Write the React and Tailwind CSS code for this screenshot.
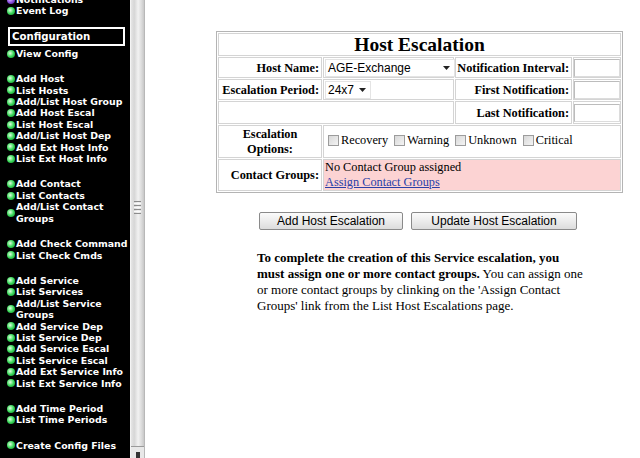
import React from 'react';

// Sidebar menu: groups of items, each item may wrap onto a second line
const menuGroups = [
    [['Notifications', 'purple'], ['Event Log']],
];

const configGroups = [
    [['View Config']],
    [
        ['Add Host'],
        ['List Hosts'],
        ['Add/List Host Group'],
        ['Add Host Escal'],
        ['List Host Escal'],
        ['Add/List Host Dep'],
        ['Add Ext Host Info'],
        ['List Ext Host Info'],
    ],
    [['Add Contact'], ['List Contacts'], ['Add/List Contact|Groups']],
    [['Add Check Command'], ['List Check Cmds']],
    [
        ['Add Service'],
        ['List Services'],
        ['Add/List Service|Groups'],
        ['Add Service Dep'],
        ['List Service Dep'],
        ['Add Service Escal'],
        ['List Service Escal'],
        ['Add Ext Service Info'],
        ['List Ext Service Info'],
    ],
    [['Add Time Period'], ['List Time Periods']],
    [['Create Config Files']],
];

function Bullet({ color }) {
    const cls =
        color === 'purple'
            ? 'bg-[radial-gradient(circle_at_40%_40%,#e0c8ff,#8a4fe0_50%,#3a1470)]'
            : 'bg-[radial-gradient(circle_at_40%_40%,#e0ffe0,#3ad85a_50%,#0f7a24)]';
    return <span className={`inline-block w-[8px] h-[8px] rounded-full shrink-0 mr-[1px] ${cls}`} />;
}

function MenuItem({ label, color }) {
    const lines = label.split('|');
    return (
        <div className="flex items-center pl-[7px] text-white">
            <Bullet color={color} />
            <span className="whitespace-nowrap">
                {lines.map((l, i) => (
                    <div key={i}>{l}</div>
                ))}
            </span>
        </div>
    );
}

function Sidebar() {
    return (
        <div className="w-[130px] shrink-0 bg-black overflow-hidden font-['DejaVu_Sans',Verdana,sans-serif] font-bold text-[9.4px] leading-[11.4px]">
            <div className="mt-[-6px]">
                {menuGroups[0].map(([l, c]) => (
                    <MenuItem key={l} label={l} color={c} />
                ))}
            </div>
            <div className="ml-[8px] mt-[10px] w-[117px] h-[19px] border-2 border-white text-white text-[10.2px] leading-[15px] pl-[2px]">
                Configuration
            </div>
            {configGroups.map((g, gi) => (
                <div key={gi} className={gi === 0 ? 'mt-[2px]' : 'mt-[14px]'}>
                    {g.map(([l, c]) => (
                        <MenuItem key={l} label={l} color={c} />
                    ))}
                </div>
            ))}
        </div>
    );
}

function Scrollbar() {
    return (
        <div className="w-[15px] shrink-0 flex flex-col border-l border-[#f4f4f4] border-r border-r-[#b8b8b8] bg-[linear-gradient(to_right,#e6e6e6,#d6d6d6_25%,#f2f2f2_55%,#dcdcdc_80%,#c8c8c8)]">
            <div className="h-[201px]" />
            <div className="flex flex-col items-center gap-[1px]">
                <div className="w-[7px] h-[1px] bg-[#8c8c8c]" />
                <div className="w-[7px] h-[1px] bg-[#fafafa]" />
                <div className="w-[7px] h-[1px] bg-[#8c8c8c]" />
                <div className="w-[7px] h-[1px] bg-[#fafafa]" />
                <div className="w-[7px] h-[1px] bg-[#8c8c8c]" />
                <div className="w-[7px] h-[1px] bg-[#fafafa]" />
                <div className="w-[7px] h-[1px] bg-[#8c8c8c]" />
            </div>
            <div className="flex-1" />
            <div className="h-[12px] border-t border-[#9a9a9a] bg-[#e8e8e8] flex justify-center">
                <div className="mt-[5px] w-[4px] h-[7px] bg-[#333]" />
            </div>
        </div>
    );
}

function Select({ value, width }) {
    return (
        <div className={`flex items-center justify-between h-[18px] ${width} bg-white border border-[#e4e4e4] pl-[2px] pr-[4px] font-['Liberation_Sans',Arial,sans-serif] text-[12px] leading-[16px] text-black`}>
            <span>{value}</span>
            <svg width="7" height="4" viewBox="0 0 7 4">
                <path d="M0 0 L7 0 L3.5 4 Z" fill="#222" />
            </svg>
        </div>
    );
}

function Box() {
    return <div className="w-full h-[18px] bg-white border border-[#dcdcdc] border-t-[#bcbcbc] border-l-[#bcbcbc]" />;
}

function Check({ label }) {
    return (
        <span className="inline-flex items-center mr-[6px]">
            <span className="inline-block w-[11px] h-[11px] border border-[#9c9c9c] bg-[linear-gradient(135deg,#d8d8d8,#f4f4f4)] mr-[2px]" />
            {label}
        </span>
    );
}

const cell = 'border border-[#d4d4d4] p-0';
const label = `${cell} text-right font-bold pr-[2px] leading-[16px]`;

function EscalationTable() {
    return (
        <table className="table-fixed w-[406px] border border-[#b4b4b4] border-separate border-spacing-[1px] font-['Liberation_Serif','Times_New_Roman',serif] text-[12.3px] text-black">
            <colgroup>
                <col className="w-[104px]" />
                <col className="w-[131px]" />
                <col className="w-[117px]" />
                <col className="w-[48px]" />
            </colgroup>
            <tbody>
                <tr className="h-[23px]">
                    <td colSpan={4} className={`${cell} text-center font-bold text-[19.5px] leading-[20px]`}>
                        Host Escalation
                    </td>
                </tr>
                <tr className="h-[21px]">
                    <td className={label}>Host Name:</td>
                    <td className={`${cell} pl-[1px]`}>
                        <Select value="AGE-Exchange" width="w-[130px]" />
                    </td>
                    <td className={label}>Notification Interval:</td>
                    <td className={cell}>
                        <Box />
                    </td>
                </tr>
                <tr className="h-[21px]">
                    <td className={label}>Escalation Period:</td>
                    <td className={`${cell} pl-[1px]`}>
                        <Select value="24x7" width="w-[46px]" />
                    </td>
                    <td className={label}>First Notification:</td>
                    <td className={cell}>
                        <Box />
                    </td>
                </tr>
                <tr className="h-[23px]">
                    <td colSpan={2} className={cell} />
                    <td className={label}>Last Notification:</td>
                    <td className={cell}>
                        <Box />
                    </td>
                </tr>
                <tr className="h-[33px]">
                    <td className={`${cell} text-center font-bold leading-[15px]`}>
                        Escalation
                        <br />
                        Options:
                    </td>
                    <td colSpan={3} className={`${cell} pl-[4px]`}>
                        <Check label="Recovery" />
                        <Check label="Warning" />
                        <Check label="Unknown" />
                        <Check label="Critical" />
                    </td>
                </tr>
                <tr className="h-[32px]">
                    <td className={`${label} pr-[1px]`}>Contact Groups:</td>
                    <td colSpan={3} className={`${cell} bg-[#fcd3d3] align-top leading-[15px] pl-[1px]`}>
                        <div>No Contact Group assigned</div>
                        <a href="#" className="text-[#2a3fa8] underline">
                            Assign Contact Groups
                        </a>
                    </td>
                </tr>
            </tbody>
        </table>
    );
}

function Button({ children, width }) {
    return (
        <button className={`${width} h-[18px] rounded-[2px] border border-[#8a8a8a] bg-[linear-gradient(to_bottom,#fbfbfb,#ececec_50%,#dcdcdc)] font-['Liberation_Sans',Arial,sans-serif] text-[12px] leading-[16px] text-black`}>
            {children}
        </button>
    );
}

export default function App() {
    return (
        <div className="flex w-[640px] h-[458px] overflow-hidden bg-white">
            <Sidebar />
            <Scrollbar />
            <div className="flex-1 bg-white pt-[31px]">
                <div className="ml-[71px]">
                    <EscalationTable />
                </div>
                <div className="flex gap-[8px] ml-[114px] mt-[19px]">
                    <Button width="w-[144px]">Add Host Escalation</Button>
                    <Button width="w-[166px]">Update Host Escalation</Button>
                </div>
                <p className="ml-[112px] mt-[20px] font-['Liberation_Serif','Times_New_Roman',serif] text-[13px] leading-[16px] text-black">
                    <b>
                        To complete the creation of this Service escalation, you
                        <br />
                        must assign one or more contact groups.
                    </b>{' '}
                    You can assign one
                    <br />
                    or more contact groups by clinking on the 'Assign Contact
                    <br />
                    Groups' link from the List Host Escalations page.
                </p>
            </div>
        </div>
    );
}
